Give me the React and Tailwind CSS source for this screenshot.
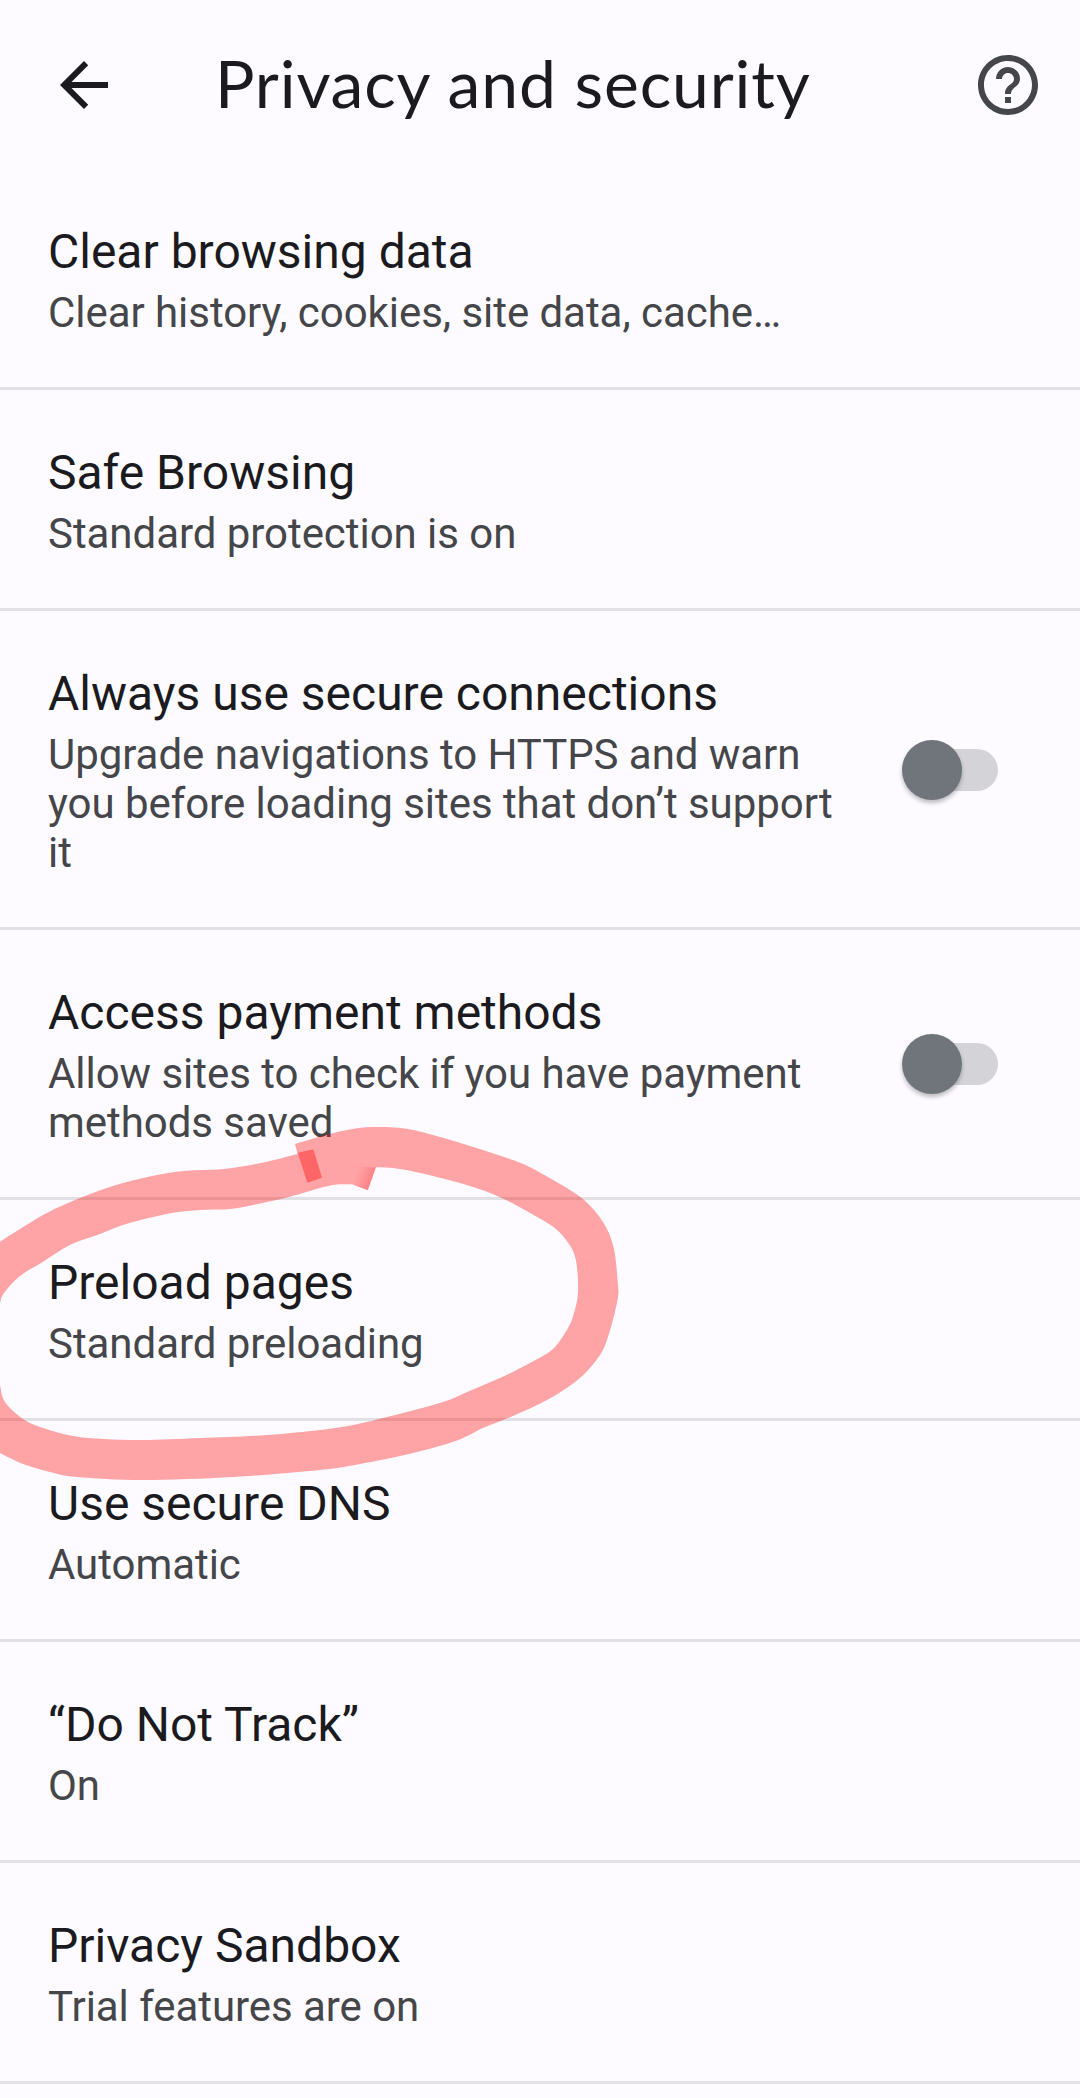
import { useState } from 'react';

const settings = [
    { id: 'clear', title: 'Clear browsing data', description: 'Clear history, cookies, site data, cache…' },
    { id: 'safe', title: 'Safe Browsing', description: 'Standard protection is on' },
    {
        id: 'https',
        title: 'Always use secure connections',
        description: 'Upgrade navigations to HTTPS and warn you before loading sites that don’t support it',
        toggle: true,
    },
    {
        id: 'payment',
        title: 'Access payment methods',
        description: 'Allow sites to check if you have payment methods saved',
        toggle: true,
    },
    { id: 'preload', title: 'Preload pages', description: 'Standard preloading' },
    { id: 'dns', title: 'Use secure DNS', description: 'Automatic' },
    { id: 'dnt', title: '“Do Not Track”', description: 'On' },
    { id: 'sandbox', title: 'Privacy Sandbox', description: 'Trial features are on' },
];

// Edges of the marker stroke, each one is smoothed on its own
const markerEdges = [
    [[295, 1144], [326, 1135], [355, 1128.5], [380, 1127], [408, 1129], [440, 1137], [470, 1146], [520, 1162.7], [553, 1180], [583, 1199], [603, 1222], [613.5, 1247], [617.5, 1280], [617.5, 1300], [607, 1340], [596.5, 1360], [577, 1380.5], [547, 1400], [513, 1416], [483, 1428], [457, 1440.5], [413, 1453], [360, 1464], [320, 1470], [233, 1477], [143, 1480], [77, 1477], [50, 1472], [23, 1464], [0, 1453]],
    [[0, 1385], [5, 1402], [23, 1419], [43, 1428], [73, 1436], [100, 1438.7], [143, 1440], [200, 1438], [267, 1435], [320, 1430], [353, 1425], [387, 1417], [443, 1402], [470, 1390.7], [500, 1378], [530, 1363], [553, 1349], [568, 1328], [574, 1313], [578, 1293], [576.7, 1265], [571.5, 1248], [558, 1230.7], [539, 1218], [504, 1199], [473, 1187], [433, 1176], [400, 1169], [376, 1167.3]],
    [[367.8, 1190.3], [352, 1184.3]],
    [[352, 1184.3], [337, 1184.5], [320, 1188], [290, 1196.7], [253, 1205], [230, 1209], [207, 1209.7], [180, 1211.7], [153, 1217], [123, 1225], [100, 1234], [70, 1245], [43, 1261.7], [20, 1276], [4, 1293], [0, 1303]],
    [[0, 1241.7], [20, 1229], [46.7, 1213], [80, 1198], [113, 1186], [150, 1176.5], [184, 1171], [224, 1169], [261, 1163], [297.6, 1154]],
];

const smoothEdge = (points) =>
    points.slice(0, -1).map(([x1, y1], i) => {
        const [x0, y0] = points[i - 1] || points[i];
        const [x2, y2] = points[i + 1];
        const [x3, y3] = points[i + 2] || points[i + 1];
        return `C${x1 + (x2 - x0) / 6} ${y1 + (y2 - y0) / 6} ${x2 - (x3 - x1) / 6} ${y2 - (y3 - y1) / 6} ${x2} ${y2}`;
    }).join('');

const markerPath = markerEdges
    .map((points, i) => `${i === 0 ? 'M' : 'L'}${points[0][0]} ${points[0][1]}${smoothEdge(points)}`)
    .join('') + 'Z';

const Switch = ({ checked, onChange, label }) => (
    <button
        role="switch"
        aria-checked={checked}
        aria-label={label}
        onClick={onChange}
        className="relative w-24 h-[60px] mb-1 flex items-center shrink-0 cursor-pointer"
    >
        <span className="w-full h-[42px] ml-2 rounded-full bg-[#d4d4d8]"></span>
        <span
            className={`absolute top-0 w-[60px] h-[60px] rounded-full bg-[#70757c] shadow-[0_3px_4px_rgba(0,0,0,0.25)] ${checked ? 'right-0' : 'left-0'}`}
        ></span>
    </button>
);

const Header = () => (
    <header className="flex items-center h-[169px] pl-12 pr-9">
        <button aria-label="Back" className="cursor-pointer">
            <svg viewBox="0 0 24 24" className="w-[72px] h-[72px] fill-[#1b1b1f]">
                <path d="M20 11H7.83l5.59-5.59L12 4l-8 8 8 8 1.41-1.41L7.83 13H20v-2z" />
            </svg>
        </button>
        <h1 className="ml-[95px] pb-[3px] grow font-['Lato',sans-serif] text-[66px] leading-none tracking-[0.85px] whitespace-nowrap text-[#1b1b1f]">
            Privacy and security
        </h1>
        <button aria-label="Help" className="cursor-pointer">
            <svg viewBox="0 0 24 24" className="w-[72px] h-[72px] fill-[#45464a]">
                <path d="M11 18h2v-2h-2v2zm1-16C6.48 2 2 6.48 2 12s4.48 10 10 10 10-4.48 10-10S17.52 2 12 2zm0 18c-4.41 0-8-3.59-8-8s3.59-8 8-8 8 3.59 8 8-3.59 8-8 8zm0-14c-2.21 0-4 1.79-4 4h2c0-1.1.9-2 2-2s2 .9 2 2c0 2-3 1.75-3 5h2c0-2.25 3-2.5 3-5 0-2.21-1.79-4-4-4z" />
            </svg>
        </button>
    </header>
);

// Hand drawn marker ring around the "Preload pages" row
const Marker = () => (
    <svg
        viewBox="0 1110 640 380"
        className="absolute left-0 top-[1110px] w-[640px] h-[380px] pointer-events-none"
    >
        <defs>
            <linearGradient id="cap" gradientUnits="userSpaceOnUse" x1="357" y1="1172" x2="374" y2="1179">
                <stop offset="0" stopColor="#ff0000" stopOpacity="0" />
                <stop offset="1" stopColor="#ff0000" stopOpacity="0.22" />
            </linearGradient>
        </defs>
        <path className="fill-[#ff0000]/35" d={markerPath} />
        <path className="fill-[#ff0000]/38" d="M297.700 1152.700L313.300 1149.300L322 1177.700L307.300 1182.700Z" />
        <path fill="url(#cap)" d="M358 1167L376 1167.300L367.800 1190.300L352 1184.300Z" />
    </svg>
);

const App = () => {
    const [enabled, setEnabled] = useState({});

    const handleToggle = (id) => {
        setEnabled(prev => ({ ...prev, [id]: !prev[id] }));
    };

    return (
        <div className="relative w-[1080px] h-[2098px] overflow-hidden bg-[#fdfbff] font-['Roboto',sans-serif]">
            <Header />
            <ul>
                {settings.map((item) => (
                    <li
                        key={item.id}
                        className="flex items-center justify-between pl-12 pr-[82px] pt-[55px] pb-[50px] border-b-3 border-[#e1e1e5]"
                    >
                        <div className="w-[810px]">
                            <h2 className="text-[48px] leading-[56px] text-[#1b1b1f]">{item.title}</h2>
                            <p className="mt-2 text-[42px] leading-[49px] tracking-[-0.05px] text-[#45464a]">{item.description}</p>
                        </div>
                        {item.toggle && (
                            <Switch
                                label={item.title}
                                checked={!!enabled[item.id]}
                                onChange={() => handleToggle(item.id)}
                            />
                        )}
                    </li>
                ))}
            </ul>
            <Marker />
        </div>
    );
};

export default App;
